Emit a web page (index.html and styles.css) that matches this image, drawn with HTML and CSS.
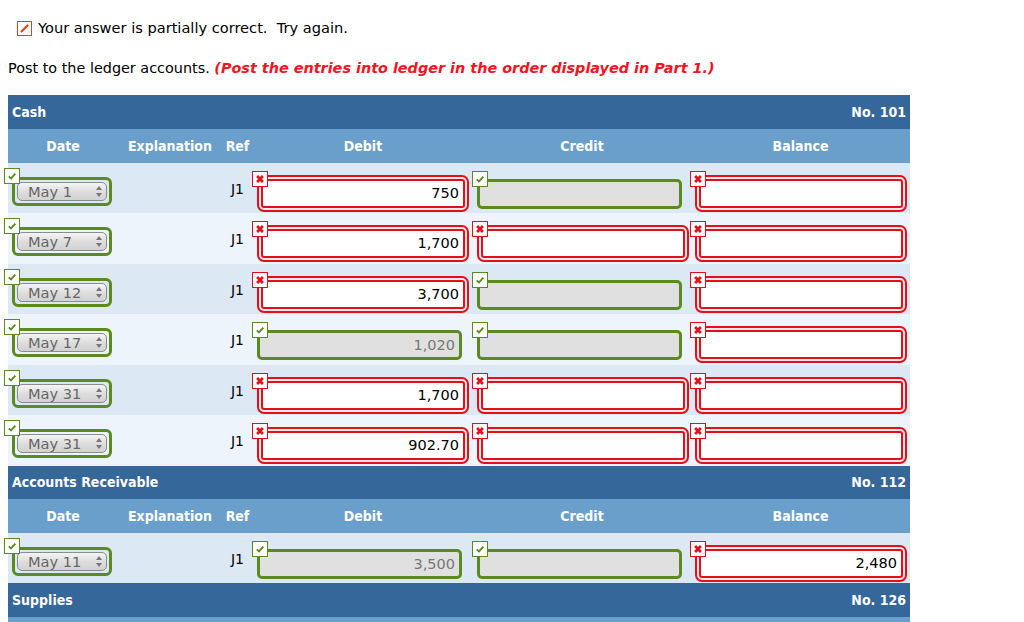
FILE: index.html
```html
<!doctype html>
<html lang="en">
  <head>
    <meta charset="UTF-8" />
    <title>Post to the ledger accounts</title>
    <link rel="stylesheet" href="styles.css">
  </head>
  <body>
    <div class="feedback">
      <span class="edit-mark">
        <svg viewBox="0 0 13 13" width="13" height="13"><path d="M3.5 9.5 L9.5 3.5" stroke="#d9471c" stroke-width="2.2" stroke-linecap="round"/></svg>
      </span>
      <span>Your answer is partially correct.&nbsp; Try again.</span>
    </div>

    <div class="prompt">
      Post to the ledger accounts. <em class="prompt-note">(Post the entries into ledger in the order displayed in Part 1.)</em>
    </div>

    <!-- Cash -->
    <div class="ledger">
      <div class="ledger-title"><span>Cash</span><span>No. 101</span></div>
      <div class="ledger-head">
        <div>Date</div><div>Explanation</div><div>Ref</div><div>Debit</div><div>Credit</div><div>Balance</div>
      </div>

      <div class="ledger-row">
        <div class="cell"><span class="mark ok date-mark"><svg viewBox="0 0 13 13"><path d="M3.5 6.8 L5.6 8.8 L9.6 4.4" /></svg></span><div class="date-box"><div class="date-select">May 1<span class="spin"></span></div></div></div>
        <div class="cell"></div>
        <div class="cell ref">J1</div>
        <div class="cell"><span class="mark bad"><svg viewBox="0 0 13 13"><path d="M3.8 3.8 L9.2 9.2 M9.2 3.8 L3.8 9.2" /></svg></span><div class="amount-bad"><div class="amount-inner">750</div></div></div>
        <div class="cell"><span class="mark ok"><svg viewBox="0 0 13 13"><path d="M3.5 6.8 L5.6 8.8 L9.6 4.4" /></svg></span><div class="amount-ok"></div></div>
        <div class="cell"><span class="mark bad"><svg viewBox="0 0 13 13"><path d="M3.8 3.8 L9.2 9.2 M9.2 3.8 L3.8 9.2" /></svg></span><div class="amount-bad"><div class="amount-inner"></div></div></div>
      </div>

      <div class="ledger-row alt">
        <div class="cell"><span class="mark ok date-mark"><svg viewBox="0 0 13 13"><path d="M3.5 6.8 L5.6 8.8 L9.6 4.4" /></svg></span><div class="date-box"><div class="date-select">May 7<span class="spin"></span></div></div></div>
        <div class="cell"></div>
        <div class="cell ref">J1</div>
        <div class="cell"><span class="mark bad"><svg viewBox="0 0 13 13"><path d="M3.8 3.8 L9.2 9.2 M9.2 3.8 L3.8 9.2" /></svg></span><div class="amount-bad"><div class="amount-inner">1,700</div></div></div>
        <div class="cell"><span class="mark bad"><svg viewBox="0 0 13 13"><path d="M3.8 3.8 L9.2 9.2 M9.2 3.8 L3.8 9.2" /></svg></span><div class="amount-bad"><div class="amount-inner"></div></div></div>
        <div class="cell"><span class="mark bad"><svg viewBox="0 0 13 13"><path d="M3.8 3.8 L9.2 9.2 M9.2 3.8 L3.8 9.2" /></svg></span><div class="amount-bad"><div class="amount-inner"></div></div></div>
      </div>

      <div class="ledger-row">
        <div class="cell"><span class="mark ok date-mark"><svg viewBox="0 0 13 13"><path d="M3.5 6.8 L5.6 8.8 L9.6 4.4" /></svg></span><div class="date-box"><div class="date-select">May 12<span class="spin"></span></div></div></div>
        <div class="cell"></div>
        <div class="cell ref">J1</div>
        <div class="cell"><span class="mark bad"><svg viewBox="0 0 13 13"><path d="M3.8 3.8 L9.2 9.2 M9.2 3.8 L3.8 9.2" /></svg></span><div class="amount-bad"><div class="amount-inner">3,700</div></div></div>
        <div class="cell"><span class="mark ok"><svg viewBox="0 0 13 13"><path d="M3.5 6.8 L5.6 8.8 L9.6 4.4" /></svg></span><div class="amount-ok"></div></div>
        <div class="cell"><span class="mark bad"><svg viewBox="0 0 13 13"><path d="M3.8 3.8 L9.2 9.2 M9.2 3.8 L3.8 9.2" /></svg></span><div class="amount-bad"><div class="amount-inner"></div></div></div>
      </div>

      <div class="ledger-row alt">
        <div class="cell"><span class="mark ok date-mark"><svg viewBox="0 0 13 13"><path d="M3.5 6.8 L5.6 8.8 L9.6 4.4" /></svg></span><div class="date-box"><div class="date-select">May 17<span class="spin"></span></div></div></div>
        <div class="cell"></div>
        <div class="cell ref">J1</div>
        <div class="cell"><span class="mark ok"><svg viewBox="0 0 13 13"><path d="M3.5 6.8 L5.6 8.8 L9.6 4.4" /></svg></span><div class="amount-ok">1,020</div></div>
        <div class="cell"><span class="mark ok"><svg viewBox="0 0 13 13"><path d="M3.5 6.8 L5.6 8.8 L9.6 4.4" /></svg></span><div class="amount-ok"></div></div>
        <div class="cell"><span class="mark bad"><svg viewBox="0 0 13 13"><path d="M3.8 3.8 L9.2 9.2 M9.2 3.8 L3.8 9.2" /></svg></span><div class="amount-bad"><div class="amount-inner"></div></div></div>
      </div>

      <div class="ledger-row">
        <div class="cell"><span class="mark ok date-mark"><svg viewBox="0 0 13 13"><path d="M3.5 6.8 L5.6 8.8 L9.6 4.4" /></svg></span><div class="date-box"><div class="date-select">May 31<span class="spin"></span></div></div></div>
        <div class="cell"></div>
        <div class="cell ref">J1</div>
        <div class="cell"><span class="mark bad"><svg viewBox="0 0 13 13"><path d="M3.8 3.8 L9.2 9.2 M9.2 3.8 L3.8 9.2" /></svg></span><div class="amount-bad"><div class="amount-inner">1,700</div></div></div>
        <div class="cell"><span class="mark bad"><svg viewBox="0 0 13 13"><path d="M3.8 3.8 L9.2 9.2 M9.2 3.8 L3.8 9.2" /></svg></span><div class="amount-bad"><div class="amount-inner"></div></div></div>
        <div class="cell"><span class="mark bad"><svg viewBox="0 0 13 13"><path d="M3.8 3.8 L9.2 9.2 M9.2 3.8 L3.8 9.2" /></svg></span><div class="amount-bad"><div class="amount-inner"></div></div></div>
      </div>

      <div class="ledger-row alt">
        <div class="cell"><span class="mark ok date-mark"><svg viewBox="0 0 13 13"><path d="M3.5 6.8 L5.6 8.8 L9.6 4.4" /></svg></span><div class="date-box"><div class="date-select">May 31<span class="spin"></span></div></div></div>
        <div class="cell"></div>
        <div class="cell ref">J1</div>
        <div class="cell"><span class="mark bad"><svg viewBox="0 0 13 13"><path d="M3.8 3.8 L9.2 9.2 M9.2 3.8 L3.8 9.2" /></svg></span><div class="amount-bad"><div class="amount-inner">902.70</div></div></div>
        <div class="cell"><span class="mark bad"><svg viewBox="0 0 13 13"><path d="M3.8 3.8 L9.2 9.2 M9.2 3.8 L3.8 9.2" /></svg></span><div class="amount-bad"><div class="amount-inner"></div></div></div>
        <div class="cell"><span class="mark bad"><svg viewBox="0 0 13 13"><path d="M3.8 3.8 L9.2 9.2 M9.2 3.8 L3.8 9.2" /></svg></span><div class="amount-bad"><div class="amount-inner"></div></div></div>
      </div>

      <!-- Accounts Receivable -->
      <div class="ledger-title"><span>Accounts Receivable</span><span>No. 112</span></div>
      <div class="ledger-head">
        <div>Date</div><div>Explanation</div><div>Ref</div><div>Debit</div><div>Credit</div><div>Balance</div>
      </div>

      <div class="ledger-row short">
        <div class="cell"><span class="mark ok date-mark"><svg viewBox="0 0 13 13"><path d="M3.5 6.8 L5.6 8.8 L9.6 4.4" /></svg></span><div class="date-box"><div class="date-select">May 11<span class="spin"></span></div></div></div>
        <div class="cell"></div>
        <div class="cell ref">J1</div>
        <div class="cell"><span class="mark ok"><svg viewBox="0 0 13 13"><path d="M3.5 6.8 L5.6 8.8 L9.6 4.4" /></svg></span><div class="amount-ok">3,500</div></div>
        <div class="cell"><span class="mark ok"><svg viewBox="0 0 13 13"><path d="M3.5 6.8 L5.6 8.8 L9.6 4.4" /></svg></span><div class="amount-ok"></div></div>
        <div class="cell"><span class="mark bad"><svg viewBox="0 0 13 13"><path d="M3.8 3.8 L9.2 9.2 M9.2 3.8 L3.8 9.2" /></svg></span><div class="amount-bad"><div class="amount-inner">2,480</div></div></div>
      </div>

      <!-- Supplies (column header row starts at the bottom edge) -->
      <div class="ledger-title"><span>Supplies</span><span>No. 126</span></div>
      <div class="ledger-head"></div>
    </div>
  </body>
</html>
```

FILE: styles.css
```css
/* Base */
body {
  margin: 0;
  padding: 0 8px;
  font-family: "DejaVu Sans", Verdana, sans-serif;
  font-size: 14.6px;
  color: #000;
  background-color: #fff;
  overflow: hidden;
}

/* Feedback line */
.feedback {
  display: flex;
  align-items: center;
  gap: 6px;
  padding: 20px 0 0 9px;
  height: 16px;
  line-height: 16px;
}

.edit-mark {
  width: 15px;
  height: 15px;
  box-sizing: border-box;
  border: 1px solid #d9471c;
  background-color: #fff;
  display: flex;
  align-items: center;
  justify-content: center;
}

.prompt {
  margin-top: 23px;
  line-height: 18px;
  font-size: 14.4px;
}

.prompt-note {
  color: #f5141e;
  font-weight: bold;
}

/* Ledger table */
.ledger {
  margin-top: 18px;
  width: 902px;
}

.ledger-title {
  display: flex;
  justify-content: space-between;
  align-items: center;
  height: 33.5px;
  padding: 0 4px;
  background-color: #36679a;
  color: #fff;
  font-family: "DejaVu Sans Condensed", "DejaVu Sans", sans-serif;
  font-size: 14px;
  font-weight: bold;
}

.ledger-head,
.ledger-row {
  display: grid;
  grid-template-columns: 110px 104px 31px 220px 218px 219px;
}

.ledger-head {
  height: 34px;
  align-items: center;
  background-color: #6a9fcb;
  color: #fff;
  font-family: "DejaVu Sans Condensed", "DejaVu Sans", sans-serif;
  font-size: 14px;
  font-weight: bold;
  text-align: center;
}

.ledger-row {
  height: 50.5px;
  background-color: #dde8f5;
}

.ledger-row.alt {
  background-color: #edf4fc;
}

.ledger-row.short {
  height: 50px;
}

.cell {
  position: relative;
}

.ref {
  text-align: center;
  padding-top: 17px;
  line-height: 18px;
  font-size: 14px;
}

/* Marks (check / cross boxes) */
.mark {
  position: absolute;
  top: 8px;
  left: -1px;
  width: 16px;
  height: 16px;
  box-sizing: border-box;
  background-color: #fff;
  display: flex;
  align-items: center;
  justify-content: center;
  z-index: 1;
}

.mark svg {
  width: 14px;
  height: 14px;
  fill: none;
}

.mark.ok {
  border: 1px solid #5b8a1f;
}

.mark.ok svg path {
  stroke: #5b8a1f;
  stroke-width: 1.7;
}

.mark.bad {
  border: 1px solid #e3101b;
}

.mark.bad svg path {
  stroke: #e3101b;
  stroke-width: 2.6;
}

.mark.date-mark {
  top: 5px;
  left: -4px;
}

/* Date select */
.date-box {
  margin: 14px 0 0 4px;
  width: 100px;
  height: 29px;
  box-sizing: border-box;
  border: 3px solid #5b8a1f;
  border-radius: 6px;
  padding: 2px;
}

.date-select {
  position: relative;
  height: 19px;
  box-sizing: border-box;
  border: 1px solid #8c8c8c;
  border-radius: 5px;
  background: linear-gradient(#f4f4f4, #dcdcdc 55%, #d2d2d2);
  color: #666;
  font-size: 14.6px;
  line-height: 18px;
  padding-left: 10px;
}

.spin {
  position: absolute;
  right: 7px;
  top: 3px;
  width: 0;
  height: 11px;
}

.spin::before,
.spin::after {
  content: "";
  position: absolute;
  left: -3px;
  border-left: 3px solid transparent;
  border-right: 3px solid transparent;
}

.spin::before {
  top: 0;
  border-bottom: 4px solid #777;
}

.spin::after {
  bottom: 0;
  border-top: 4px solid #777;
}

/* Amount fields */
.amount-bad {
  margin: 12px 0 0 4px;
  width: 212px;
  height: 37px;
  box-sizing: border-box;
  border: 2px solid #e3101b;
  border-radius: 7px;
  padding: 2px;
  background-color: #fbe9ea;
}

.amount-inner {
  height: 100%;
  box-sizing: border-box;
  border: 2px solid #e3101b;
  border-radius: 3px;
  background-color: #fff;
  text-align: right;
  padding-right: 4px;
  font-size: 14.5px;
  line-height: 25px;
}

.amount-ok {
  margin: 16px 0 0 4px;
  width: 205px;
  height: 30px;
  box-sizing: border-box;
  border: 3px solid #5b8a1f;
  border-radius: 5px;
  background-color: #e0e0e0;
  color: #777;
  text-align: right;
  padding-right: 4px;
  font-size: 14.5px;
  line-height: 24px;
}
```
